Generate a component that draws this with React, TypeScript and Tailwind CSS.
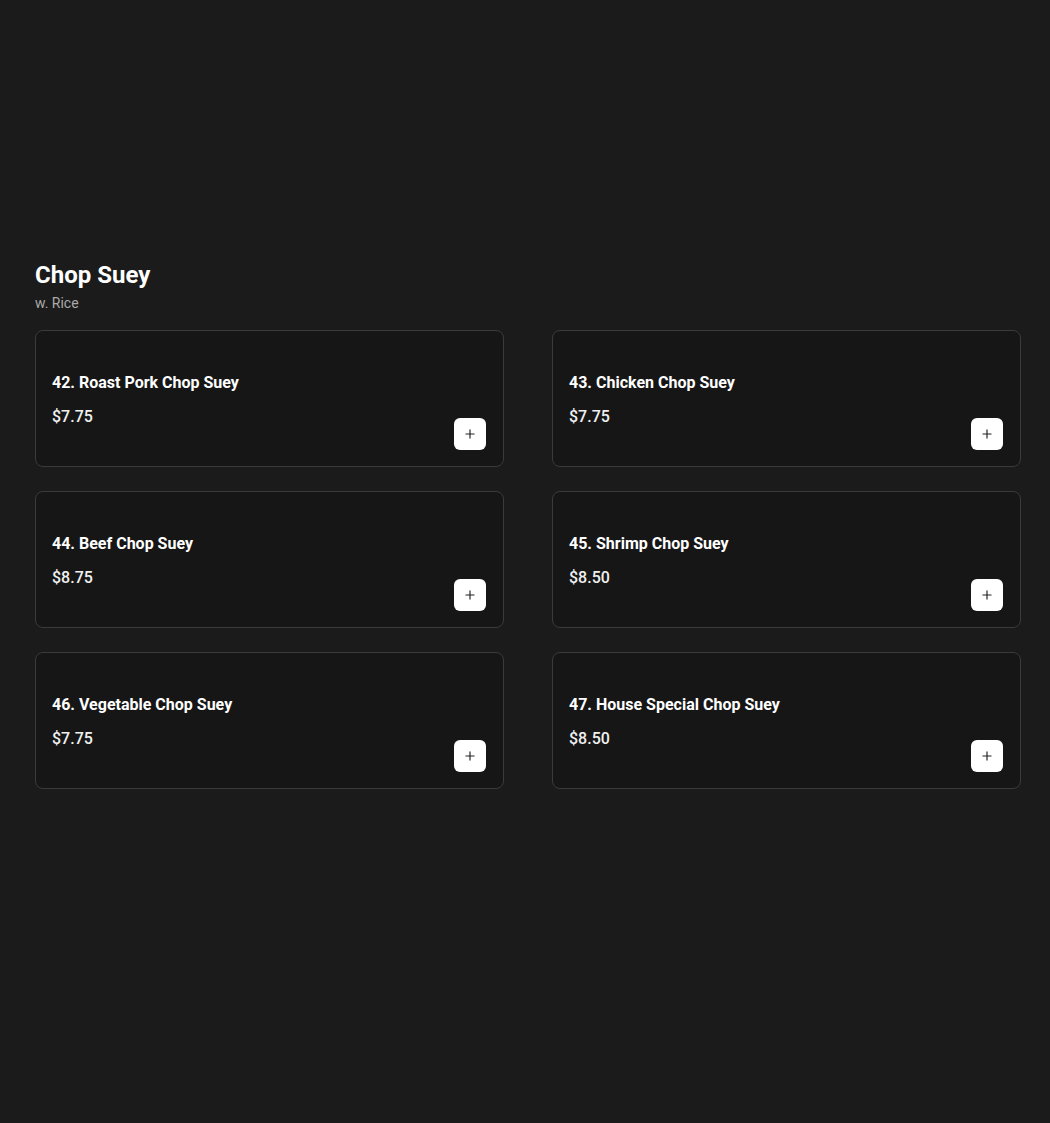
import { Plus } from 'lucide-react'

const ITEMS = [
  { id: 42, name: 'Roast Pork Chop Suey', price: '$7.75' },
  { id: 43, name: 'Chicken Chop Suey', price: '$7.75' },
  { id: 44, name: 'Beef Chop Suey', price: '$8.75' },
  { id: 45, name: 'Shrimp Chop Suey', price: '$8.50' },
  { id: 46, name: 'Vegetable Chop Suey', price: '$7.75' },
  { id: 47, name: 'House Special Chop Suey', price: '$8.50' }
]

export default function App() {
  return (
    <div className="min-h-[1123px] bg-[#1b1b1b] text-white font-['Roboto',sans-serif] pt-[259px] pl-[35px] pr-[29px]">
      {/* Section header */}
      <h2 className="text-2xl leading-8 font-bold">Chop Suey</h2>
      <p className="text-sm leading-5 text-[#aaaaaa] mt-[2px]">w. Rice</p>

      {/* Items */}
      <div className="grid grid-cols-2 gap-x-[48px] gap-y-[24px] mt-[17px]">
        {ITEMS.map((item) => (
          <div
            key={item.id}
            className="h-[137px] bg-[#161616] border border-[#3b3b3b] rounded-lg pl-4 pr-[17px] pt-[40px] pb-4 flex items-end justify-between"
          >
            <div className="flex flex-col gap-[10px] mb-[21px]">
              <p className="text-base leading-6 font-bold">
                {item.id}. {item.name}
              </p>
              <p className="text-base leading-6 font-medium text-[#f0f0f0]">{item.price}</p>
            </div>
            <button className="w-8 h-8 bg-white rounded-md flex items-center justify-center text-[#222]">
              <Plus className="w-[14px] h-[14px]" strokeWidth={2} />
            </button>
          </div>
        ))}
      </div>
    </div>
  )
}
